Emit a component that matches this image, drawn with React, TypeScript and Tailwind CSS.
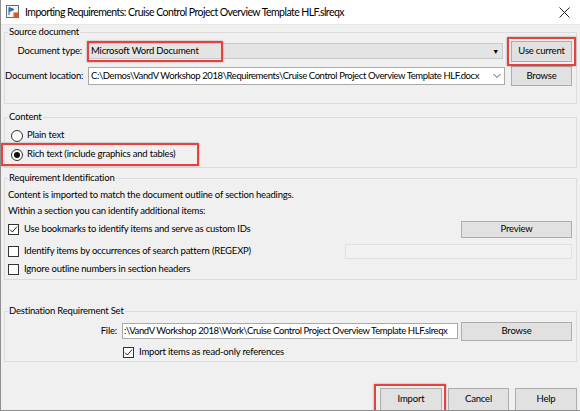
import React from "react";

const font = { fontFamily: 'Lato, "Noto Sans", sans-serif' };

function Button({ label, className = "" }: { label: string; className?: string }) {
  return (
    <div
      className={`flex items-center justify-center bg-[#e1e1e1] border border-[#adadad] text-[9.5px] tracking-[-0.2px] text-black ${className}`}
    >
      {label}
    </div>
  );
}

function RedBox({ className }: { className: string }) {
  return (
    <div
      className={`absolute pointer-events-none border-2 border-[#e8403f] shadow-[0_0_2px_rgba(0,0,0,0.35)] ${className}`}
    />
  );
}

function Checkbox({ checked }: { checked?: boolean }) {
  return (
    <div className="w-[11px] h-[11px] shrink-0 bg-white border border-[#333] flex items-center justify-center">
      {checked && (
        <svg width="9" height="9" viewBox="0 0 9 9">
          <path d="M1 4.6 L3.4 7 L8 1.6" fill="none" stroke="#222" strokeWidth="1" />
        </svg>
      )}
    </div>
  );
}

function Radio({ checked }: { checked?: boolean }) {
  return (
    <div className="w-[12px] h-[12px] shrink-0 rounded-full bg-white border border-[#333] flex items-center justify-center">
      {checked && <div className="w-[6px] h-[6px] rounded-full bg-[#111]" />}
    </div>
  );
}

function Group({ title, children, className = "" }: { title: string; children: React.ReactNode; className?: string }) {
  return (
    <fieldset className={`border border-[#dcdcdc] min-w-0 ${className}`}>
      <legend className="ml-[3px] px-[1px] text-[9.5px] tracking-[-0.2px] leading-[14px] text-black">{title}</legend>
      {children}
    </fieldset>
  );
}

export default function App() {
  return (
    <div
      style={font}
      className="w-[580px] h-[411px] overflow-hidden bg-[#f0f0f0] border-l border-b border-[#8f8f8f] text-black text-[9.5px] tracking-[-0.2px]"
    >
      {/* Title bar */}
      <div className="h-[25px] bg-white flex items-center border-b border-[#e6e6e6]">
        <svg width="14" height="14" viewBox="0 0 14 14" className="ml-[5px]">
          <rect x="0.5" y="0.5" width="12" height="12" fill="#f4f4f4" stroke="#6b6b6b" />
          <path d="M3 2.5 L3 10 M3 2.5 L8 4.5 L3 6.5" fill="#2a7fd4" stroke="#1f5fa8" strokeWidth="1" />
          <rect x="7.5" y="7.5" width="5" height="5" fill="#e2571d" />
        </svg>
        <span className="ml-[5px] text-[10.5px] tracking-[-0.55px] leading-none">
          Importing Requirements: Cruise Control Project Overview Template HLF.slreqx
        </span>
        <svg width="11" height="11" viewBox="0 0 11 11" className="ml-auto mr-[10px]">
          <path d="M0.5 0.5 L10.5 10.5 M10.5 0.5 L0.5 10.5" stroke="#222" strokeWidth="1" />
        </svg>
      </div>

      <div className="px-[3px]">
        {/* Source document */}
        <Group title="Source document">
          <div className="flex items-center h-[22px] mt-[1px] pr-[4px]">
            <div className="w-[77px] text-right shrink-0 whitespace-nowrap">Document type:</div>
            <div className="relative ml-[6px] flex-1 h-[16px] bg-[#e4e4e4] border border-[#c9c9c9] flex items-center pl-[2px]">
              Microsoft Word Document
              <span className="ml-auto mr-[3px] text-[7px]">▼</span>
              <RedBox className="-left-[2px] -top-[3px] w-[136px] h-[21px]" />
            </div>
            <div className="relative ml-[8px]">
              <Button label="Use current" className="w-[61px] h-[21px]" />
              <RedBox className="-left-[4px] -top-[4px] -right-[4px] -bottom-[4px]" />
            </div>
          </div>
          <div className="flex items-center h-[22px] mt-[3px] pr-[4px]">
            <div className="w-[77px] text-right shrink-0 whitespace-nowrap">Document location:</div>
            <div className="ml-[6px] flex-1 min-w-0 h-[18px] bg-white border border-[#a9a9a9] flex items-center pl-[2px] whitespace-nowrap overflow-hidden">
              <span className="tracking-[-0.4px]">
                C:\Demos\VandV Workshop 2018\Requirements\Cruise Control Project Overview Template HLF.docx
              </span>
              <svg width="8" height="6" viewBox="0 0 8 6" className="ml-auto mr-[3px] shrink-0">
                <path d="M0.5 1 L4 4.5 L7.5 1" fill="none" stroke="#555" strokeWidth="1" />
              </svg>
            </div>
            <Button label="Browse" className="ml-[6px] w-[61px] h-[20px] shrink-0" />
          </div>
          <div className="h-[16px]" />
        </Group>

        {/* Content */}
        <Group title="Content" className="mt-[6px]">
          <div className="flex items-center h-[19px] mt-[2px] pl-[6px] gap-[4px]">
            <Radio />
            <span>Plain text</span>
          </div>
          <div className="relative flex items-center h-[19px] pl-[6px] gap-[4px]">
            <Radio checked />
            <span>Rich text (include graphics and tables)</span>
            <RedBox className="-left-[4px] -top-[2px] w-[198px] h-[23px]" />
          </div>
          <div className="h-[3px]" />
        </Group>

        {/* Requirement Identification */}
        <Group title="Requirement Identification" className="mt-[3px]">
          <div className="pl-[3px] pr-[4px]">
            <div className="h-[16px] mt-[2px] flex items-center">
              Content is imported to match the document outline of section headings.
            </div>
            <div className="h-[16px] flex items-center">Within a section you can identify additional items:</div>
            <div className="h-[18px] mt-[1px] flex items-center gap-[5px]">
              <Checkbox checked />
              <span>Use bookmarks to identify items and serve as custom IDs</span>
              <Button label="Preview" className="ml-auto w-[111px] h-[17px]" />
            </div>
            <div className="h-[18px] mt-[4px] flex items-center gap-[5px]">
              <Checkbox />
              <span>Identify items by occurrences of search pattern (REGEXP)</span>
              <div className="ml-auto w-[227px] h-[15px] bg-[#f2f2f2] border border-[#e0e0e0]" />
            </div>
            <div className="h-[16px] mt-[1px] flex items-center gap-[5px]">
              <Checkbox />
              <span>Ignore outline numbers in section headers</span>
            </div>
          </div>
          <div className="h-[2px]" />
        </Group>

        {/* Destination Requirement Set */}
        <Group title="Destination Requirement Set" className="mt-[24px]">
          <div className="flex items-center h-[20px] mt-[3px] pr-[4px]">
            <div className="w-[112px] text-right shrink-0">File:</div>
            <div className="ml-[5px] w-[336px] h-[16px] bg-white border border-[#a9a9a9] flex items-center pl-[1px] whitespace-nowrap overflow-hidden">
              <span className="tracking-[-0.4px]">:\VandV Workshop 2018\Work\Cruise Control Project Overview Template HLF.slreqx</span>
            </div>
            <Button label="Browse" className="ml-auto w-[111px] h-[19px]" />
          </div>
          <div className="flex items-center h-[18px] mt-[2px] pl-[118px] gap-[5px]">
            <Checkbox checked />
            <span>Import items as read-only references</span>
          </div>
        </Group>
      </div>

      {/* Bottom buttons */}
      <div className="flex justify-end gap-[6px] pr-[3px] mt-[26px]">
        <div className="relative">
          <Button label="Import" className="w-[62px] h-[23px]" />
          <RedBox className="-left-[6px] -top-[4px] -right-[4px] h-[40px]" />
        </div>
        <Button label="Cancel" className="w-[61px] h-[23px]" />
        <Button label="Help" className="w-[62px] h-[23px]" />
      </div>
    </div>
  );
}
